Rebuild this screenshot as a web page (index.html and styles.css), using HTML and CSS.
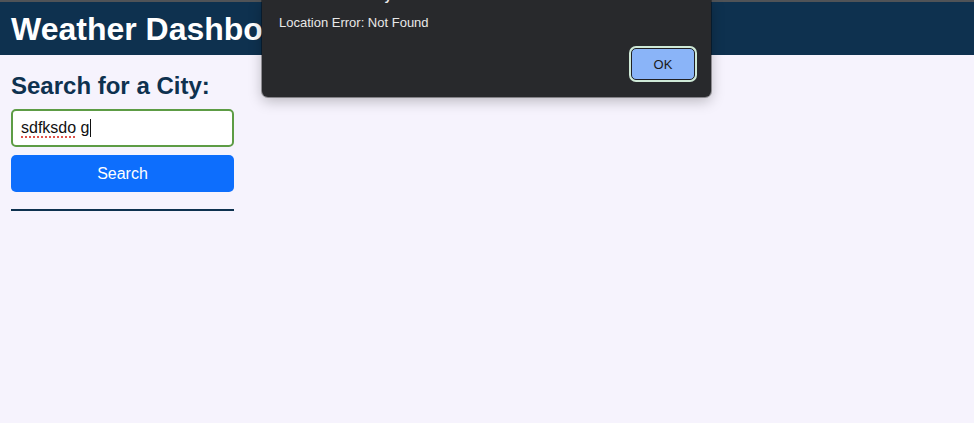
FILE: index.html
```html
<!DOCTYPE html>
<html lang="en">
<head>
<meta charset="utf-8">
<title>Weather Dashboard</title>
<link rel="stylesheet" href="styles.css">
</head>
<body>
<div class="chrome-line"></div>
<header class="site-header">
  <h1 class="site-title">Weather Dashboard</h1>
</header>
<main class="layout">
  <aside class="sidebar">
    <h2 class="search-title">Search for a City:</h2>
    <div class="city-input"><span class="misspelled">sdfksdo</span>&nbsp;g<span class="caret"></span></div>
    <button class="search-btn" type="button">Search</button>
    <div class="divider"></div>
  </aside>
</main>
<div class="alert-dialog" role="alertdialog">
  <div class="alert-origin">127.0.0.1:5500 says</div>
  <p class="alert-message">Location Error: Not Found</p>
  <div class="alert-actions">
    <button class="alert-ok" type="button">OK</button>
  </div>
</div>
</body>
</html>
```

FILE: styles.css
```css
* { box-sizing: border-box; }
html, body { margin: 0; padding: 0; }
body {
  background: #f6f3fd;
  font-family: "Liberation Sans", Arial, Helvetica, sans-serif;
  width: 974px;
  height: 423px;
  overflow: hidden;
  position: relative;
}
.chrome-line { height: 2px; background: #505357; }
.site-header {
  height: 53px;
  background: #0e314f;
  display: flex;
  align-items: center;
  padding-left: 11px;
}
.site-title {
  margin: 0;
  color: #ffffff;
  font-size: 32px;
  font-weight: bold;
  line-height: 1;
  padding-top: 1px;
}
.layout { display: flex; padding: 0 11px; }
.sidebar { width: 223px; display: flex; flex-direction: column; }
.search-title {
  margin: 18px 0 0;
  color: #0e314f;
  font-size: 24px;
  font-weight: bold;
  line-height: 26px;
}
.city-input {
  margin-top: 10px;
  height: 38px;
  background: #ffffff;
  border: 2px solid #5d9c45;
  border-radius: 5px;
  padding: 0 8px;
  display: flex;
  align-items: center;
  font-size: 16px;
  color: #111;
}
.misspelled {
  text-decoration: underline dotted #e0524a;
  text-decoration-thickness: 2px;
  text-underline-offset: 3px;
}
.caret { display: inline-block; width: 1px; height: 18px; background: #111; margin-left: 1px; }
.search-btn {
  margin-top: 8px;
  height: 37px;
  border: none;
  border-radius: 5px;
  background: #0d6efd;
  color: #ffffff;
  font-family: inherit;
  font-size: 16px;
  padding: 0;
}
.divider { margin-top: 17px; height: 2px; background: #0e314f; }

.alert-dialog {
  position: absolute;
  left: 262px;
  top: 0;
  width: 449px;
  height: 97px;
  background: #28292c;
  border-radius: 0 0 6px 6px;
  box-shadow: 0 4px 14px rgba(0,0,0,0.25), 0 0 0 1px rgba(0,0,0,0.35);
  padding: 0 16px 0 17px;
  overflow: hidden;
}
.alert-origin {
  position: absolute;
  top: -11px;
  left: 17px;
  color: #e8e8e8;
  font-size: 13px;
  font-weight: bold;
  line-height: 14px;
}
.alert-message {
  margin: 15px 0 0;
  color: #e8e8e8;
  font-size: 13px;
  line-height: 16px;
}
.alert-actions { display: flex; justify-content: flex-end; margin-top: 17px; }
.alert-ok {
  width: 64px;
  height: 32px;
  background: #8ab4f8;
  border: 1px solid #1f2023;
  box-shadow: 0 0 0 2px #cfe9d7;
  border-radius: 5px;
  color: #1a1a1a;
  font-family: inherit;
  font-size: 13px;
  padding: 0;
}
```
